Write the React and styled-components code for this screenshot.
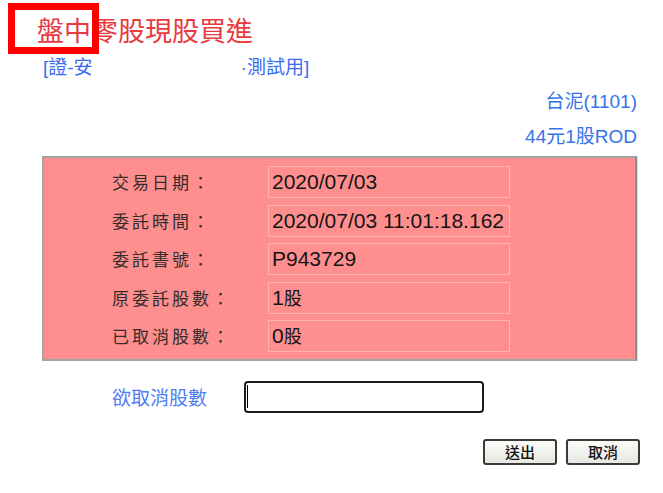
import React from "react";
import styled, { createGlobalStyle } from "styled-components";

const GlobalStyle = createGlobalStyle`
  html, body { margin: 0; padding: 0; background: #ffffff; }
  body { font-family: "Liberation Sans", "Noto Sans CJK TC", sans-serif; }
  * { box-sizing: border-box; }
`;

const Page = styled.div`
  width: 663px;
  height: 493px;
  display: flex;
  flex-direction: column;
  overflow: hidden;
`;

const Header = styled.header`
  position: relative;
  padding: 13px 0 0 37px;
`;

const Title = styled.h1`
  margin: 0;
  font-family: "Noto Sans CJK TC", sans-serif;
  font-weight: 400;
  font-size: 27px;
  line-height: 34px;
  color: #e83a40;
  letter-spacing: 0;
`;

const Annotation = styled.div`
  position: absolute;
  left: 8px;
  top: 3px;
  width: 91px;
  height: 51px;
  border: 7px solid #ff0000;
`;

const Subtitle = styled.div`
  margin: 9px 0 0 43px;
  font-size: 19px;
  line-height: 24px;
  color: #3b6cf0;
  white-space: nowrap;
`;

const Redacted = styled.span`
  display: inline-block;
  width: 148px;
`;

const InfoRight = styled.div`
  margin: 4px 26px 0 0;
  display: flex;
  flex-direction: column;
  align-items: flex-end;
`;

const InfoLine = styled.div`
  font-size: 19px;
  line-height: 35px;
  color: #3473ec;
`;

const Panel = styled.section`
  margin: 2px 0 0 42px;
  width: 595px;
  background: #ff8f8f;
  border: 2px solid #a3a3a3;
  border-right-color: #8e8e8e;
  box-shadow: 1px 0 0 #dcdcdc;
  padding: 8px 0 7px 68px;
  display: flex;
  flex-direction: column;
  gap: 6.5px;
`;

const Row = styled.div`
  display: grid;
  grid-template-columns: 156px 242px;
  align-items: center;
  height: 32px;
`;

const Label = styled.div`
  font-family: "Noto Sans CJK TC", sans-serif;
  font-size: 17px;
  letter-spacing: 3px;
  color: #342c2c;
  white-space: nowrap;
  line-height: 32px;
`;

const Value = styled.div`
  height: 32px;
  border: 1px solid #ffb3b3;
  padding: 0 0 1px 3px;
  font-size: 21px;
  line-height: 29px;
  color: #141414;
  white-space: nowrap;
  overflow: hidden;
`;

const Unit = styled.span`
  font-family: "Noto Sans CJK TC", sans-serif;
  font-size: 18px;
`;

const CancelRow = styled.div`
  margin: 20px 0 0 112px;
  display: grid;
  grid-template-columns: 132px 240px;
  align-items: center;
  height: 32px;
`;

const CancelLabel = styled.label`
  font-family: "Noto Sans CJK TC", sans-serif;
  font-size: 19px;
  line-height: 32px;
  color: #4f7bf2;
`;

const InputWrap = styled.div`
  position: relative;
  width: 240px;
  height: 32px;
  &::after {
    content: "";
    position: absolute;
    left: 3px;
    top: 4px;
    width: 1px;
    height: 23px;
    background: #000;
  }
`;

const Input = styled.input`
  width: 240px;
  height: 32px;
  border: 2px solid #1c1c1c;
  border-radius: 4px;
  background: #fff;
  outline: none;
  padding: 0 4px;
  font-size: 16px;
`;

const ButtonRow = styled.div`
  margin: 26px 23px 0 0;
  display: flex;
  justify-content: flex-end;
  gap: 9px;
`;

const Button = styled.button`
  width: 74px;
  height: 26px;
  padding: 0;
  border: 2px solid #3a3a3a;
  border-radius: 3px;
  background: linear-gradient(#fbfbf8, #e8e8e2);
  font-family: "Noto Sans CJK TC", sans-serif;
  font-size: 15px;
  font-weight: 500;
  line-height: 22px;
  color: #111;
  cursor: pointer;
`;

const rows = [
  { label: "交易日期：", value: "2020/07/03" },
  { label: "委託時間：", value: "2020/07/03 11:01:18.162" },
  { label: "委託書號：", value: "P943729" },
  { label: "原委託股數：", value: "1", unit: "股" },
  { label: "已取消股數：", value: "0", unit: "股" },
];

export default function App() {
  return (
    <>
      <GlobalStyle />
      <Page>
        <Header>
          <Title>盤中零股現股買進</Title>
          <Annotation />
        </Header>
        <Subtitle>
          [證-安<Redacted />·測試用]
        </Subtitle>
        <InfoRight>
          <InfoLine>台泥(1101)</InfoLine>
          <InfoLine>44元1股ROD</InfoLine>
        </InfoRight>
        <Panel>
          {rows.map((r) => (
            <Row key={r.label}>
              <Label>{r.label}</Label>
              <Value>
                {r.value}
                {r.unit && <Unit>{r.unit}</Unit>}
              </Value>
            </Row>
          ))}
        </Panel>
        <CancelRow>
          <CancelLabel htmlFor="cancelQty">欲取消股數</CancelLabel>
          <InputWrap>
            <Input id="cancelQty" type="text" />
          </InputWrap>
        </CancelRow>
        <ButtonRow>
          <Button type="button">送出</Button>
          <Button type="button">取消</Button>
        </ButtonRow>
      </Page>
    </>
  );
}
